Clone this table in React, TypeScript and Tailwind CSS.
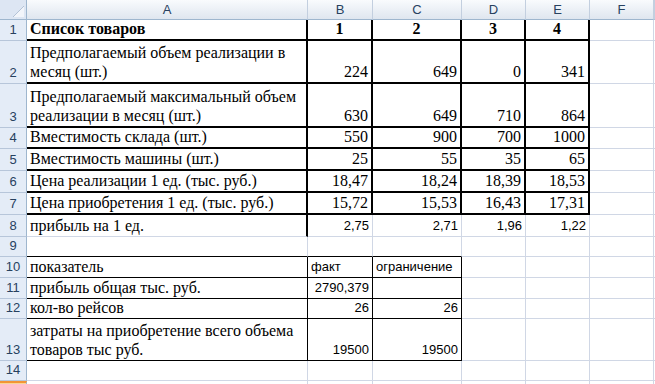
import React from 'react';

// Excel 2007 style sheet fragment
const serif = "[font-family:'Liberation_Serif','Times_New_Roman',serif] text-[16px]";
const sans = "[font-family:'Liberation_Sans',Arial,sans-serif] text-[13px]";

const gR = 'border-r border-r-[#d0d7e5]';
const gB = 'border-b border-b-[#d0d7e5]';
const tR = 'border-r-2 border-r-black';
const tB = 'border-b-2 border-b-black';
const bR = 'border-r border-r-black';
const bB = 'border-b border-b-black';

const grid = `${gR} ${gB}`;
const thick = `${tR} ${tB}`;
const thin = `${bR} ${bB}`;

const L = 'justify-start';
const R = 'justify-end';
const C = 'justify-center';

type CellDef = [React.ReactNode, string];

const Cell = ({ children, cls }: { children?: React.ReactNode; cls: string }) => (
  <div className={`flex items-end overflow-hidden whitespace-nowrap leading-[19px] px-[3px] pb-[1px] text-black ${cls}`}>
    <span>{children}</span>
  </div>
);

const RowHead = ({ n, active }: { n: number; active?: boolean }) =>
  active ? (
    <div className="border-t-2 border-t-[#f29536] border-r border-r-[#9eb6ce] bg-[#fad592]" />
  ) : (
    <div
      className={`flex items-end justify-center pb-[1px] leading-[19px] border-r border-r-[#9eb6ce] border-b border-b-[#b7c6da] bg-[#e4ecf7] text-[#27415f] ${sans}`}
    >
      {n}
    </div>
  );

const empty = (n: number, cls: string): CellDef[] => Array.from({ length: n }, () => [null, cls] as CellDef);

const rows: { n: number; cells: CellDef[] }[] = [
  {
    n: 1,
    cells: [
      ['Список товаров', `${serif} font-bold ${L} ${thick}`],
      ['1', `${serif} font-bold ${C} ${thick}`],
      ['2', `${serif} font-bold ${C} ${thick}`],
      ['3', `${serif} font-bold ${C} ${thick}`],
      ['4', `${serif} font-bold ${C} ${thick}`],
      ...empty(2, grid),
    ],
  },
  {
    n: 2,
    cells: [
      [<>Предполагаемый объем реализации в<br />месяц (шт.)</>, `${serif} ${L} ${thick}`],
      ['224', `${serif} ${R} ${thick}`],
      ['649', `${serif} ${R} ${thick}`],
      ['0', `${serif} ${R} ${thick}`],
      ['341', `${serif} ${R} ${thick}`],
      ...empty(2, grid),
    ],
  },
  {
    n: 3,
    cells: [
      [<>Предполагаемый максимальный объем<br />реализации в месяц (шт.)</>, `${serif} ${L} ${thick}`],
      ['630', `${serif} ${R} ${thick}`],
      ['649', `${serif} ${R} ${thick}`],
      ['710', `${serif} ${R} ${thick}`],
      ['864', `${serif} ${R} ${thick}`],
      ...empty(2, grid),
    ],
  },
  {
    n: 4,
    cells: [
      ['Вместимость склада (шт.)', `${serif} ${L} ${thick}`],
      ['550', `${serif} ${R} ${thick}`],
      ['900', `${serif} ${R} ${thick}`],
      ['700', `${serif} ${R} ${thick}`],
      ['1000', `${serif} ${R} ${thick}`],
      ...empty(2, grid),
    ],
  },
  {
    n: 5,
    cells: [
      ['Вместимость машины (шт.)', `${serif} ${L} ${thick}`],
      ['25', `${serif} ${R} ${thick}`],
      ['55', `${serif} ${R} ${thick}`],
      ['35', `${serif} ${R} ${thick}`],
      ['65', `${serif} ${R} ${thick}`],
      ...empty(2, grid),
    ],
  },
  {
    n: 6,
    cells: [
      ['Цена реализации 1 ед. (тыс. руб.)', `${serif} ${L} ${thick}`],
      ['18,47', `${serif} ${R} ${thick}`],
      ['18,24', `${serif} ${R} ${thick}`],
      ['18,39', `${serif} ${R} ${thick}`],
      ['18,53', `${serif} ${R} ${thick}`],
      ...empty(2, grid),
    ],
  },
  {
    n: 7,
    cells: [
      ['Цена приобретения 1 ед. (тыс. руб.)', `${serif} ${L} ${thick}`],
      ['15,72', `${serif} ${R} ${thick}`],
      ['15,53', `${serif} ${R} ${thick}`],
      ['16,43', `${serif} ${R} ${thick}`],
      ['17,31', `${serif} ${R} ${thick}`],
      ...empty(2, grid),
    ],
  },
  {
    n: 8,
    cells: [
      ['прибыль на 1 ед.', `${serif} ${L} ${tR} ${gB}`],
      ['2,75', `${sans} ${R} ${grid}`],
      ['2,71', `${sans} ${R} ${grid}`],
      ['1,96', `${sans} ${R} ${grid}`],
      ['1,22', `${sans} ${R} ${grid}`],
      ...empty(2, grid),
    ],
  },
  {
    n: 9,
    cells: [...empty(3, `${gR} ${bB}`), ...empty(4, grid)],
  },
  {
    n: 10,
    cells: [
      ['показатель', `${serif} ${L} ${thin}`],
      ['факт', `${sans} ${L} ${thin}`],
      ['ограничение', `${sans} ${L} ${thin}`],
      ...empty(4, grid),
    ],
  },
  {
    n: 11,
    cells: [
      ['прибыль общая тыс. руб.', `${serif} ${L} ${thin}`],
      ['2790,379', `${sans} ${R} ${thin}`],
      [null, thin],
      ...empty(4, grid),
    ],
  },
  {
    n: 12,
    cells: [
      ['кол-во рейсов', `${serif} ${L} ${thin}`],
      ['26', `${sans} ${R} ${thin}`],
      ['26', `${sans} ${R} ${thin}`],
      ...empty(4, grid),
    ],
  },
  {
    n: 13,
    cells: [
      [<>затраты на приобретение всего объема<br />товаров тыс руб.</>, `${serif} ${L} ${thin}`],
      ['19500', `${sans} ${R} ${thin}`],
      ['19500', `${sans} ${R} ${thin}`],
      ...empty(4, grid),
    ],
  },
  { n: 14, cells: empty(7, grid) },
  { n: 15, cells: empty(7, grid) },
];

const letters = ['A', 'B', 'C', 'D', 'E', 'F', ''];

export default function App() {
  return (
    <div className="w-[655px] h-[384px] overflow-hidden bg-white">
      <div className="grid grid-cols-[27px_281px_65px_89px_64px_64px_64px_1px] grid-rows-[20px_21px_43px_44px_21px_22px_22px_22px_22px_20px_21px_21px_20px_42px_20px_20px]">
        {/* corner */}
        <div className="flex items-end justify-end bg-[#dde6f3] border-r border-r-[#9eb6ce] border-b border-b-[#9eb6ce] pr-[1px] pb-[1px]">
          <svg width="13" height="12" viewBox="0 0 13 12">
            <polygon points="12,0 12,11 1,11" fill="#f2f5fa" />
            <line x1="12" y1="0" x2="1" y2="11" stroke="#b3c2d6" strokeWidth="1" />
          </svg>
        </div>
        {letters.map((l, i) => (
          <div
            key={i}
            className={`flex items-center justify-center bg-linear-to-b from-[#f9fbfd] to-[#dfe6ef] border-r border-r-[#c3cfdf] border-b border-b-[#9eb6ce] text-[#27415f] ${sans}`}
          >
            {l}
          </div>
        ))}

        {rows.map((row) => (
          <React.Fragment key={row.n}>
            <RowHead n={row.n} active={row.n === 15} />
            {row.cells.map(([content, cls], i) => (
              <Cell key={i} cls={cls}>
                {content}
              </Cell>
            ))}
          </React.Fragment>
        ))}
      </div>
    </div>
  );
}
